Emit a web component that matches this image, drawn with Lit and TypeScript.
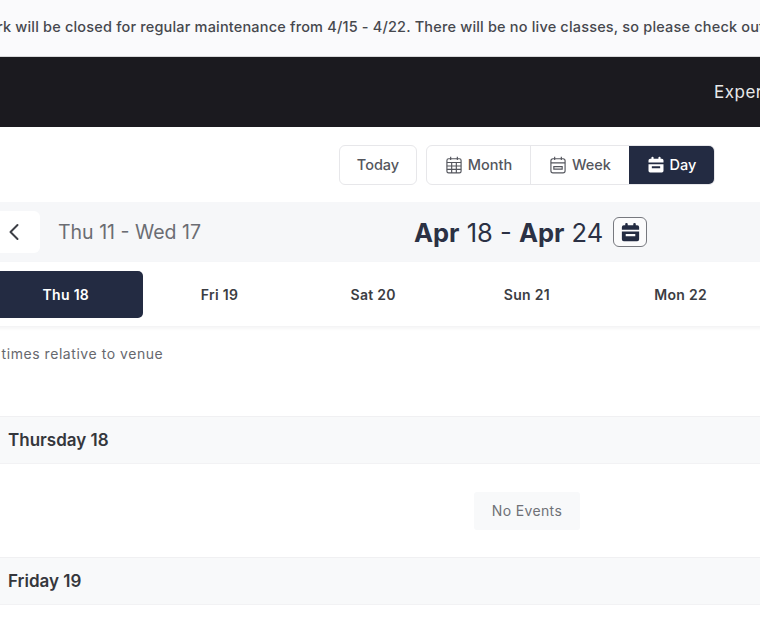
import { LitElement, html, css } from "lit";
import { customElement } from "lit/decorators.js";

const calFilled = (cls: string) => html`<svg class=${cls} viewBox="0 0 24 24" fill="currentColor" aria-hidden="true">
  <rect x="6.5" y="2" width="2.6" height="5" rx="1.2"/><rect x="14.9" y="2" width="2.6" height="5" rx="1.2"/>
  <path d="M5 4.5h14a2 2 0 0 1 2 2V9H3V6.5a2 2 0 0 1 2-2zM3 11h18v8a2 2 0 0 1-2 2H5a2 2 0 0 1-2-2v-8zm4 2.6v2.4h10v-2.4H7z" fill-rule="evenodd"/>
</svg>`;

const calMonth = html`<svg class="ic" viewBox="0 0 24 24" fill="none" stroke="currentColor" stroke-width="1.4" aria-hidden="true">
  <rect x="3.5" y="4.5" width="17" height="17" rx="2"/><path d="M8 2v4M16 2v4M3.5 9h17M3.5 13.2h17M3.5 17.3h17M9.2 9v12.5M14.8 9v12.5"/>
</svg>`;

const calWeek = html`<svg class="ic" viewBox="0 0 24 24" fill="none" stroke="currentColor" stroke-width="1.4" aria-hidden="true">
  <rect x="3.5" y="4.5" width="17" height="17" rx="2.5"/><path d="M8 2v4M16 2v4M3.5 9.5h17M7 14h10v3H7z"/>
</svg>`;

@customElement("app-root")
export class AppRoot extends LitElement {
  static styles = css`
    :host {
      display: block;
      width: 760px;
      height: 630px;
      overflow: hidden;
      background: #fff;
      font-family: Inter, "Liberation Sans", sans-serif;
      color: #33353b;
    }
    .banner {
      height: 57px;
      background: #fafafc;
      display: flex;
      align-items: center;
      padding-bottom: 4px;
      box-sizing: border-box;
      font-size: 14.5px;
      letter-spacing: 0.18px;
      font-weight: 450;
      color: #46484e;
      white-space: nowrap;
      border-bottom: 1px solid #d8d8da;
    }
    .banner span { margin-left: -52px; }
    .nav {
      height: 70px;
      background: #1b1a1f;
      display: flex;
      justify-content: flex-end;
      align-items: center;
      overflow: hidden;
      color: #e8e8ea;
      font-size: 17px;
      letter-spacing: 0.5px;
      font-weight: 400;
    }
    .nav span { margin-right: -61px; width: 107px; }
    .toolbar {
      height: 75px;
      display: flex;
      justify-content: flex-end;
      align-items: center;
      gap: 9px;
      padding: 0 45px 0 0;
      font-size: 14.5px;
      font-weight: 450;
      color: #54565d;
    }
    .btn, .group {
      height: 40px;
      box-sizing: border-box;
      border: 1px solid #e7e7ea;
      border-radius: 6px;
      background: #fff;
      display: flex;
      align-items: center;
    }
    .btn { width: 78px; justify-content: center; }
    .group { overflow: hidden; }
    .seg {
      height: 100%;
      display: flex;
      align-items: center;
      justify-content: center;
      gap: 4px;
      padding-right: 1px;
      box-sizing: border-box;
    }
    .seg.month { width: 104px; border-right: 1px solid #e7e7ea; }
    .seg.week { width: 98px; }
    .seg.day { width: 85px; background: #232b42; color: #fff; }
    .ic { width: 20px; height: 20px; flex: none; }
    .range {
      height: 60px;
      background: #f6f7f9;
      display: flex;
      align-items: center;
    }
    .back {
      width: 40px;
      height: 42px;
      margin-right: 18px;
      background: #fff;
      border-radius: 0 6px 6px 0;
      display: flex;
      align-items: center;
      justify-content: center;
      color: #3c3e45;
      box-sizing: border-box;
      padding-right: 12px;
    }
    .back svg { width: 12px; height: 18px; }
    .prev { font-size: 19.5px; color: #6b6d73; width: 356px; }
    .current {
      font-size: 25.5px;
      color: #2b3144;
      display: flex;
      align-items: center;
      gap: 10px;
      white-space: nowrap;
    }
    .current b { font-weight: 700; }
    .cal-btn {
      width: 34px;
      height: 30px;
      box-sizing: border-box;
      border: 1.5px solid #77797f;
      border-radius: 6px;
      display: flex;
      align-items: center;
      justify-content: center;
      color: #232b42;
      background: #fbfbfc;
    }
    .cal-btn .ic { width: 23px; height: 23px; }
    .tabs {
      height: 64px;
      background: #fff;
      margin-left: -11px;
      width: 1100px;
      display: grid;
      grid-template-columns: repeat(7, 153.7px);
      align-items: center;
      box-shadow: 0 2px 4px rgba(20, 24, 40, 0.06);
      font-size: 14px;
      letter-spacing: 0.3px;
      font-weight: 600;
      color: #3b3d43;
      text-align: center;
    }
    .tab { height: 47px; line-height: 47px; border-radius: 5px; }
    .tab.on { background: #232b42; color: #fff; }
    .note {
      height: 90px;
      box-sizing: border-box;
      padding-top: 19px;
      font-size: 14px;
      letter-spacing: 0.55px;
      color: #66686e;
      white-space: nowrap;
      margin-left: -21px;
    }
    .day-head {
      height: 48px;
      box-sizing: border-box;
      background: #f8f9fa;
      border-top: 1px solid #f0f0f2;
      border-bottom: 1px solid #f2f2f4;
      display: flex;
      align-items: center;
      padding-left: 8px;
      padding-bottom: 1px;
      font-size: 17px;
      font-weight: 600;
      color: #35373c;
    }
    .day-body {
      height: 93px;
      width: 1054px;
      display: flex;
      align-items: center;
      justify-content: center;
    }
    .empty {
      width: 106px;
      height: 38px;
      background: #f8f9fa;
      display: flex;
      align-items: center;
      justify-content: center;
      border-radius: 3px;
      font-size: 14px;
      letter-spacing: 0.35px;
      color: #6f7177;
    }
  `;

  render() {
    return html`
      <div class="banner"><span>The park will be closed for regular maintenance from 4/15 - 4/22. There will be no live classes, so please check out our schedule</span></div>
      <div class="nav"><span>Experiences</span></div>
      <div class="toolbar">
        <div class="btn">Today</div>
        <div class="group">
          <div class="seg month">${calMonth}Month</div>
          <div class="seg week">${calWeek}Week</div>
          <div class="seg day">${calFilled("ic")}Day</div>
        </div>
      </div>
      <div class="range">
        <div class="back"><svg viewBox="0 0 12 18" fill="none" stroke="currentColor" stroke-width="2" stroke-linecap="round" stroke-linejoin="round"><path d="M9.5 2 2.5 9l7 7"/></svg></div>
        <div class="prev">Thu 11 - Wed 17</div>
        <div class="current">
          <span><b>Apr</b> 18 - <b>Apr</b> 24</span>
          <div class="cal-btn">${calFilled("ic")}</div>
        </div>
      </div>
      <div class="tabs">
        <div class="tab on">Thu 18</div>
        <div class="tab">Fri 19</div>
        <div class="tab">Sat 20</div>
        <div class="tab">Sun 21</div>
        <div class="tab">Mon 22</div>
        <div class="tab">Tue 23</div>
        <div class="tab">Wed 24</div>
      </div>
      <div class="note">All times relative to venue</div>
      <div class="day-head">Thursday 18</div>
      <div class="day-body"><div class="empty">No Events</div></div>
      <div class="day-head">Friday 19</div>
    `;
  }
}
